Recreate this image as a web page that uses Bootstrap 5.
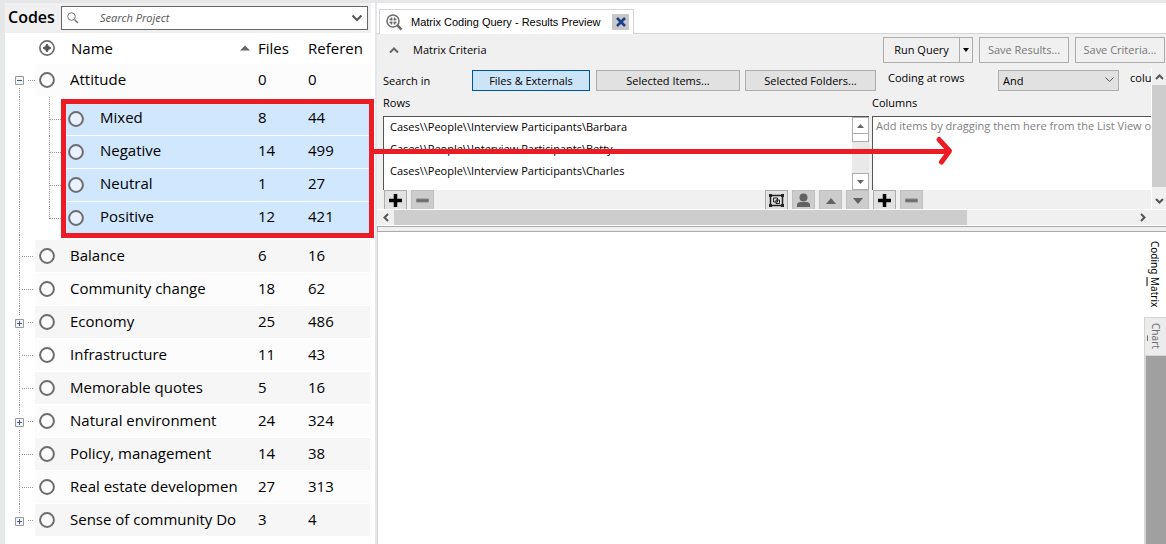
<!DOCTYPE html>
<html lang="en">
<head>
<meta charset="utf-8">
<meta name="viewport" content="width=device-width, initial-scale=1">
<title>Matrix Coding Query</title>
<link href="https://cdn.jsdelivr.net/npm/bootstrap@5.3.0/dist/css/bootstrap.min.css" rel="stylesheet">
<style>
  body { font-family: "Open Sans", "Noto Sans", sans-serif; font-size: 11px; line-height: 16px; color: #000; background: #fff; }
  button, select, input { font-family: inherit; color: inherit; border-radius: 0; }
  svg { display: block; flex: none; }
  .app { border-top: 3px solid #e6e7e9; border-left: 5px solid #e6e7e9; overflow: hidden; }

  /* code list */
  .codes { width: 372px; flex: none; border-right: 2px solid #e6e7ea; }
  .codes-head { height: 30px; background: #f0f0f0; margin-right: 4px; padding: 0 3px; }
  .codes-head h1 { font-size: 16px; line-height: 24px; padding-bottom: 2px; font-weight: 600; width: 53px; }
  .search { height: 24px; border: 1px solid #666; background: #fff; padding: 0 4px; }
  .search input { font-size: 11px; font-style: italic; border: 0; outline: 0; padding: 0; width: 100%; background: none; }
  .search input::placeholder { color: #555; opacity: 1; }
  .code-table { width: 365px; table-layout: fixed; border-collapse: separate; border-spacing: 0; font-size: 15px; line-height: 20px; white-space: nowrap; }
  .code-table td, .code-table th { padding: 0; font-weight: 400; vertical-align: middle; overflow: hidden; }
  .code-table thead th { height: 31px; padding-bottom: 2px; }
  .code-table .item { height: 33px; }
  .cell { height: 32px; margin-bottom: 1px; padding-bottom: 2px; display: flex; align-items: center; }
  .odd .cell { background: #fcfcfc; }
  .even .cell { background: #f6f6f6; }
  .picked .cell { background: #d1e7fe; padding-bottom: 4px; }
  .ring { width: 16px; height: 16px; margin: 2px 15px 0 4px; }
  .picked .ring { margin: 4px 16px 0 2px; }
  .fill { flex: 1; min-width: 0; }

  /* tabs and criteria */
  .tabbar { height: 31px; border-bottom: 1px solid #d5d5d5; padding-left: 2px; }
  .doc-tab { width: 255px; height: 25px; border: 1px solid #d5d5d5; border-bottom: 0; margin-bottom: -1px; background: #fff; padding: 0 4px 0 6px; font-family: "Liberation Sans", sans-serif; }
  .close-btn { width: 17px; height: 16px; padding: 0; border: 0; background: #c8c8c8; display: grid; place-items: center; }
  .criteria { background: #f0f0f0; }
  .criteria-head { height: 34px; padding: 3px 1px 5px 12px; gap: 6px; }
  .box-btn { height: 26px; border: 1px solid #adadad; background: #f0f0f0; padding: 0; white-space: nowrap; }
  .box-btn:disabled { color: #777; }
  .w-cmd { width: 90px; }
  .w-run { width: 77px; }
  .w-drop { width: 14px; margin-left: -1px; }
  .opt { height: 21px; background: #e1e1e1; flex: none; }
  .opt.active { background: #cce4f7; border-color: #005499; }
  .opt-files { width: 118px; margin-right: 6px; }
  .opt-items { width: 144px; margin-right: 5px; }
  .opt-folders { width: 131px; margin-right: 12px; }
  .view { overflow: hidden; padding-left: 6px; height: 141px; }
  .options { height: 26px; padding-top: 2px; white-space: nowrap; }
  .so-label { width: 89px; flex: none; padding-top: 3px; }
  .op-label { width: 110px; flex: none; }
  .op-wrap { margin-right: 11px; flex: none; }
  .op-wrap > * { grid-area: 1 / 1; }
  .op-wrap svg { place-self: center end; margin: 0 5px 5px 0; pointer-events: none; }
  .op-select { width: 121px; height: 21px; border: 1px solid #adadad; background: #e1e1e1; appearance: none; padding: 0 4px; }
  .panes { gap: 3px; }
  .rows-pane { width: 486px; flex: none; }
  .pane-label { height: 22px; padding-top: 1px; }
  .list-area { height: 74px; background: #fff; border-top: 1px solid #555; border-left: 1px solid #555; overflow: hidden; white-space: nowrap; }
  .list-area ul { font-size: 11px; line-height: 20px; padding-left: 6px; }
  .list-area li { padding-bottom: 2px; }
  .hint { color: #808080; padding: 1px 3px; }
  .mini { width: 17px; background: #e9e9e9; }
  .mini button { width: 17px; height: 17px; border: 1px solid #adadad; background: #fff; padding: 0; display: grid; place-items: center; }
  .mini .mini-thumb { height: 8px; border: 1px solid #adadad; border-top: 0; background: #fff; }
  .tools { height: 19px; overflow: hidden; gap: 4px; padding-left: 1px; }
  .tool { width: 23px; height: 21px; flex: none; border: 1px solid #adadad; background: #e1e1e1; padding: 0; display: grid; place-items: center; }
  .tool:disabled { background: #ccc; border-color: #bfbfbf; }
  .vbar { width: 15px; flex: none; border-left: 1px solid #fff; }
  .vbar button, .hbar button { border: 0; background: none; padding: 0; display: grid; place-items: center; }
  .vbar button { height: 17px; width: 14px; }
  .vthumb { background: #cdcdcd; margin-bottom: 5px; }
  .hbar { height: 17px; border-top: 1px solid #fff; border-bottom: 1px solid #fff; padding-right: 15px; }
  .hbar button { width: 17px; }
  .hthumb { width: 74%; background: #cdcdcd; height: 15px; }
  .splitter { height: 6px; background: #f0f0f0; border-top: 1px solid #aaa; border-bottom: 1px solid #aaa; border-left: 1px solid #aaa; }
  .result { border-left: 1px solid #d5d5d5; }
  .side-tabs { width: 22px; font-family: "Noto Sans", sans-serif; font-size: 10px; }
  .side-tabs button { writing-mode: vertical-rl; border: 0; background: #fff; padding: 0; line-height: 18px; text-align: left; }
  .side-tabs u { text-underline-offset: 1px; }
  .side-tabs .first { height: 85px; padding: 9px 1px 0 0; }
  .side-tabs .second { height: 39px; padding: 5px 0 0; background: #ececec; color: #707070; border: 1px solid #d5d5d5; border-right: 0; }
  .side-rest { background: #a0a0a0; border-left: 2px solid #d5d5d5; }
  .callout { position: absolute; left: 0; top: 0; pointer-events: none; }
</style>
</head>
<body>
<svg width="0" height="0" class="position-absolute" aria-hidden="true">
  <defs>
    <symbol id="ring" viewBox="0 0 16 16"><circle cx="8" cy="8" r="6.9" fill="#fff" fill-opacity=".5" stroke="#6d6d6d" stroke-width="2"/></symbol>
    <symbol id="t-vert" viewBox="0 0 30 33"><path d="M14.500 0V33" stroke="#999" stroke-dasharray="1 1"/></symbol>
    <symbol id="t-leaf" viewBox="0 0 30 33"><path d="M14.500 0V33M17 16.500H28" stroke="#999" stroke-dasharray="1 1"/></symbol>
    <symbol id="t-plus" viewBox="0 0 30 33"><path d="M14.500 0V10M14.500 25V33M23 16.500H28" stroke="#999" stroke-dasharray="1 1"/><path d="M10.500 13.500h8v8h-8z" fill="#f4f4f4" stroke="#999"/><path d="M12 17.500h5M14.500 15v5" stroke="#3c5a9a"/></symbol>
    <symbol id="t-last" viewBox="0 0 30 33"><path d="M14.500 0V10M23 16.500H28" stroke="#999" stroke-dasharray="1 1"/><path d="M10.500 13.500h8v8h-8z" fill="#f4f4f4" stroke="#999"/><path d="M12 17.500h5M14.500 15v5" stroke="#3c5a9a"/></symbol>
    <symbol id="t-minus" viewBox="0 0 30 33"><path d="M14.500 24V33M23 16.500H30" stroke="#999" stroke-dasharray="1 1"/><path d="M10.500 12.500h8v8h-8z" fill="#f4f4f4" stroke="#999"/><path d="M12 16.500h5" stroke="#3c5a9a"/></symbol>
    <symbol id="b-mid" viewBox="0 0 31 33"><path d="M14.500 0V33M15 16.500H31" stroke="#999" stroke-dasharray="1 1"/></symbol>
    <symbol id="b-end" viewBox="0 0 31 33"><path d="M14.500 0V17M15 16.500H31" stroke="#999" stroke-dasharray="1 1"/></symbol>
    <symbol id="plus" viewBox="0 0 15 15"><path d="M7.500 1v13M1 7.500h13" stroke="#000" stroke-width="3.500"/></symbol>
    <symbol id="minus" viewBox="0 0 15 15"><path d="M1.500 6h12v3h-12z" fill="#6a6a6a" stroke="#888"/></symbol>
  </defs>
</svg>

<div class="app d-flex min-vh-100 position-relative">
  <aside class="codes">
    <div class="codes-head d-flex align-items-center">
      <h1 class="m-0">Codes</h1>
      <div class="search d-flex align-items-center flex-fill">
        <svg width="14" height="14" viewBox="0 0 14 14" fill="none" stroke="#777" class="me-3"><circle cx="5.500" cy="5.500" r="3.800"/><path d="M8.500 8.500L12 12" stroke-width="1.500"/></svg>
        <input type="text" placeholder="Search Project" aria-label="Search Project" class="ms-1">
        <svg width="12" height="8" viewBox="0 0 12 8" fill="none" stroke="#555" stroke-width="2"><path d="M1.500 1.500L6 6l4.500-4.500"/></svg>
      </div>
    </div>
    <table class="code-table">
      <colgroup><col style="width:30px"><col style="width:223px"><col style="width:50px"><col></colgroup>
      <thead>
        <tr>
          <th></th>
          <th><div class="d-flex align-items-center">
            <svg width="16" height="16" viewBox="0 0 16 16" class="ms-1"><circle cx="8" cy="8" r="7.100" fill="#fff" stroke="#6d6d6d" stroke-width="1.700"/><path d="M8 4L9.500 6.500 12 8 9.500 9.500 8 12 6.500 9.500 4 8 6.500 6.500z" fill="#555" stroke="#555"/></svg>
            <span class="fill ps-3">Name</span>
            <svg width="10" height="6" viewBox="0 0 10 6" class="me-2"><path d="M0 5.500L5 .5l5 5z" fill="#666"/></svg>
          </div></th>
          <th>Files</th><th>Referen</th>
        </tr>
      </thead>
      <tbody>
        <tr class="item odd"><td><svg width="30" height="33"><use href="#t-minus"/></svg></td><td><div class="cell"><svg class="ring"><use href="#ring"/></svg>Attitude</div></td><td><div class="cell">0</div></td><td><div class="cell">0</div></td></tr>
        <tr><td><svg width="30" height="6"><path d="M14.500 0V6" stroke="#999" stroke-dasharray="1 1"/></svg></td><td colspan="3"><svg width="30" height="6"><path d="M14.500 0V6" stroke="#999" stroke-dasharray="1 1"/></svg></td></tr>
      </tbody>
      <tbody class="picked">
        <tr class="item"><td><svg width="30" height="33"><use href="#t-vert"/></svg></td><td><div class="d-flex"><svg width="31" height="33"><use href="#b-mid"/></svg><div class="cell fill"><svg class="ring"><use href="#ring"/></svg>Mixed</div></div></td><td><div class="cell">8</div></td><td><div class="cell">44</div></td></tr>
        <tr class="item"><td><svg width="30" height="33"><use href="#t-vert"/></svg></td><td><div class="d-flex"><svg width="31" height="33"><use href="#b-mid"/></svg><div class="cell fill"><svg class="ring"><use href="#ring"/></svg>Negative</div></div></td><td><div class="cell">14</div></td><td><div class="cell">499</div></td></tr>
        <tr class="item"><td><svg width="30" height="33"><use href="#t-vert"/></svg></td><td><div class="d-flex"><svg width="31" height="33"><use href="#b-mid"/></svg><div class="cell fill"><svg class="ring"><use href="#ring"/></svg>Neutral</div></div></td><td><div class="cell">1</div></td><td><div class="cell">27</div></td></tr>
        <tr class="item"><td><svg width="30" height="33"><use href="#t-vert"/></svg></td><td><div class="d-flex"><svg width="31" height="33"><use href="#b-end"/></svg><div class="cell fill"><svg class="ring"><use href="#ring"/></svg>Positive</div></div></td><td><div class="cell">12</div></td><td><div class="cell">421</div></td></tr>
      </tbody>
      <tbody>
        <tr><td colspan="4"><svg width="30" height="5"><path d="M14.500 0V5" stroke="#999" stroke-dasharray="1 1"/></svg></td></tr>
        <tr class="item even"><td><svg width="30" height="33"><use href="#t-leaf"/></svg></td><td><div class="cell"><svg class="ring"><use href="#ring"/></svg>Balance</div></td><td><div class="cell">6</div></td><td><div class="cell">16</div></td></tr>
        <tr class="item odd"><td><svg width="30" height="33"><use href="#t-leaf"/></svg></td><td><div class="cell"><svg class="ring"><use href="#ring"/></svg>Community change</div></td><td><div class="cell">18</div></td><td><div class="cell">62</div></td></tr>
        <tr class="item even"><td><svg width="30" height="33"><use href="#t-plus"/></svg></td><td><div class="cell"><svg class="ring"><use href="#ring"/></svg>Economy</div></td><td><div class="cell">25</div></td><td><div class="cell">486</div></td></tr>
        <tr class="item odd"><td><svg width="30" height="33"><use href="#t-leaf"/></svg></td><td><div class="cell"><svg class="ring"><use href="#ring"/></svg>Infrastructure</div></td><td><div class="cell">11</div></td><td><div class="cell">43</div></td></tr>
        <tr class="item even"><td><svg width="30" height="33"><use href="#t-leaf"/></svg></td><td><div class="cell"><svg class="ring"><use href="#ring"/></svg>Memorable quotes</div></td><td><div class="cell">5</div></td><td><div class="cell">16</div></td></tr>
        <tr class="item odd"><td><svg width="30" height="33"><use href="#t-plus"/></svg></td><td><div class="cell"><svg class="ring"><use href="#ring"/></svg>Natural environment</div></td><td><div class="cell">24</div></td><td><div class="cell">324</div></td></tr>
        <tr class="item even"><td><svg width="30" height="33"><use href="#t-leaf"/></svg></td><td><div class="cell"><svg class="ring"><use href="#ring"/></svg>Policy, management</div></td><td><div class="cell">14</div></td><td><div class="cell">38</div></td></tr>
        <tr class="item odd"><td><svg width="30" height="33"><use href="#t-leaf"/></svg></td><td><div class="cell"><svg class="ring"><use href="#ring"/></svg>Real estate developmen</div></td><td><div class="cell">27</div></td><td><div class="cell">313</div></td></tr>
        <tr class="item even"><td><svg width="30" height="33"><use href="#t-last"/></svg></td><td><div class="cell"><svg class="ring"><use href="#ring"/></svg>Sense of community Do</div></td><td><div class="cell">3</div></td><td><div class="cell">4</div></td></tr>
      </tbody>
    </table>
  </aside>

  <main class="fill d-flex flex-column">
    <div class="tabbar d-flex align-items-end">
      <div class="doc-tab d-flex align-items-center">
        <svg width="17" height="17" viewBox="0 0 17 17" fill="none" stroke="#6b6b6b"><circle cx="7" cy="7" r="6" stroke-width="1.500"/><path d="M11.500 11.500L15.500 15.500" stroke-width="2.500"/><path d="M3.500 5.500h3M7.500 5.500h3M3.500 8.500h3M7.500 8.500h3M5.500 3.500v3M8.500 3.500v3M5.500 7.500v3M8.500 7.500v3" stroke-width="1.500"/></svg>
        <span class="fill ps-1 ms-1 text-nowrap">Matrix Coding Query - Results Preview</span>
        <button class="close-btn" type="button" aria-label="Close tab"><svg width="10" height="10" viewBox="0 0 10 10" stroke="#1b3f8b" stroke-width="2.500"><path d="M1 1l8 8M9 1L1 9"/></svg></button>
      </div>
    </div>

    <section class="criteria">
      <div class="criteria-head d-flex align-items-center">
        <svg width="10" height="7" viewBox="0 0 10 7" fill="none" stroke="#666" stroke-width="2"><path d="M1 5.500L5 1.500l4 4"/></svg>
        <span class="fill ps-2">Matrix Criteria</span>
        <div class="d-flex">
          <button class="box-btn w-run" type="button">Run Query</button>
          <button class="box-btn w-drop d-grid align-items-center justify-content-center" type="button" aria-label="Run options"><svg width="6" height="4" viewBox="0 0 6 4"><path d="M0 0h6L3 4z"/></svg></button>
        </div>
        <button class="box-btn w-cmd" type="button" disabled>Save Results...</button>
        <button class="box-btn w-cmd" type="button" disabled>Save Criteria...</button>
      </div>

      <div class="d-flex">
        <div class="view fill">
          <div class="options d-flex">
            <span class="so-label">Search in</span>
            <button class="box-btn opt opt-files active" type="button">Files &amp; Externals</button>
            <button class="box-btn opt opt-items" type="button">Selected Items...</button>
            <button class="box-btn opt opt-folders" type="button">Selected Folders...</button>
            <label for="op" class="op-label">Coding at rows</label>
            <div class="d-grid op-wrap"><select id="op" class="op-select"><option>And</option></select><svg width="9" height="6" viewBox="0 0 9 6" fill="none" stroke="#555"><path d="M.5.5l4 4 4-4"/></svg></div>
            <span>colu</span>
          </div>
          <div class="d-flex panes">
            <div class="rows-pane">
              <div class="pane-label">Rows</div>
              <div class="list-area d-flex">
                <ul class="fill list-unstyled m-0">
                  <li>Cases\\People\\Interview Participants\Barbara</li>
                  <li>Cases\\People\\Interview Participants\Betty</li>
                  <li>Cases\\People\\Interview Participants\Charles</li>
                </ul>
                <div class="mini d-flex flex-column">
                  <button type="button" aria-label="Scroll up"><svg width="7" height="4" viewBox="0 0 7 4"><path d="M0 4h7L3.500 0z" fill="#666"/></svg></button>
                  <div class="mini-thumb mb-auto"></div>
                  <button type="button" aria-label="Scroll down"><svg width="7" height="4" viewBox="0 0 7 4"><path d="M0 0h7L3.500 4z" fill="#666"/></svg></button>
                </div>
              </div>
              <div class="tools d-flex">
                <button class="tool" type="button" aria-label="Add row"><svg width="15" height="15"><use href="#plus"/></svg></button>
                <button class="tool me-auto" type="button" aria-label="Remove row" disabled><svg width="15" height="15"><use href="#minus"/></svg></button>
                <button class="tool" type="button" aria-label="Group"><svg width="15" height="13" viewBox="0 0 15 13" fill="none" stroke="#222"><path d="M1.500 1.500h12v10h-12z" stroke-width="1.500"/><path d="M4.500 4h4v4h-4zM7 6h3.500v3.500H7z"/><path d="M0 0h3v3H0zM12 0h3v3h-3zM0 10h3v3H0zM12 10h3v3h-3z" fill="#222" stroke="none"/></svg></button>
                <button class="tool" type="button" aria-label="Person" disabled><svg width="15" height="15" viewBox="0 0 15 15" fill="#626262"><circle cx="7.500" cy="4.500" r="4"/><path d="M1 14v-2q0-3 4-3h5q4 0 4 3v2z"/></svg></button>
                <button class="tool" type="button" aria-label="Move up" disabled><svg width="10" height="6" viewBox="0 0 10 6" fill="#626262"><path d="M0 6h10L5 0z"/></svg></button>
                <button class="tool" type="button" aria-label="Move down" disabled><svg width="10" height="6" viewBox="0 0 10 6" fill="#626262"><path d="M0 0h10L5 6z"/></svg></button>
              </div>
            </div>
            <div class="fill">
              <div class="pane-label">Columns</div>
              <div class="list-area"><div class="hint">Add items by dragging them here from the List View or</div></div>
              <div class="tools d-flex">
                <button class="tool" type="button" aria-label="Add column"><svg width="15" height="15"><use href="#plus"/></svg></button>
                <button class="tool" type="button" aria-label="Remove column" disabled><svg width="15" height="15"><use href="#minus"/></svg></button>
              </div>
            </div>
          </div>
        </div>
        <div class="vbar d-flex flex-column">
          <button type="button" aria-label="Scroll up"><svg width="9" height="6" viewBox="0 0 9 6" fill="none" stroke="#555" stroke-width="2"><path d="M1 5l3.500-3.500L8 5"/></svg></button>
          <div class="vthumb flex-fill"></div>
          <button type="button" aria-label="Scroll down"><svg width="9" height="6" viewBox="0 0 9 6" fill="none" stroke="#555" stroke-width="2"><path d="M1 1l3.500 3.500L8 1"/></svg></button>
        </div>
      </div>
      <div class="hbar d-flex align-items-center">
        <button type="button" aria-label="Scroll left"><svg width="6" height="9" viewBox="0 0 6 9" fill="none" stroke="#555" stroke-width="2"><path d="M5 1L1.500 4.500 5 8"/></svg></button>
        <div class="hthumb me-auto"></div>
        <button type="button" aria-label="Scroll right"><svg width="6" height="9" viewBox="0 0 6 9" fill="none" stroke="#555" stroke-width="2"><path d="M1 1l3.500 3.500L1 8"/></svg></button>
      </div>
      <div class="splitter"></div>
    </section>

    <section class="result d-flex flex-fill">
      <div class="fill"></div>
      <div class="side-tabs d-flex flex-column">
        <button class="first" type="button">Coding <u>M</u>atrix</button>
        <button class="second" type="button">Ch<u>a</u>rt</button>
        <div class="side-rest flex-fill"></div>
      </div>
    </section>
  </main>

  <svg class="callout" width="960" height="240" fill="none" stroke="#ed1c24" stroke-width="5" aria-hidden="true">
    <path d="M58.500 98.500h308v134h-308z"/>
    <path d="M367 148.500H945"/>
    <path d="M934 136.500L944.500 148L936.500 159" stroke-linecap="round" stroke-linejoin="round"/>
  </svg>
</div>
<script src="https://cdn.jsdelivr.net/npm/bootstrap@5.3.0/dist/js/bootstrap.bundle.min.js"></script>
</body>
</html>
